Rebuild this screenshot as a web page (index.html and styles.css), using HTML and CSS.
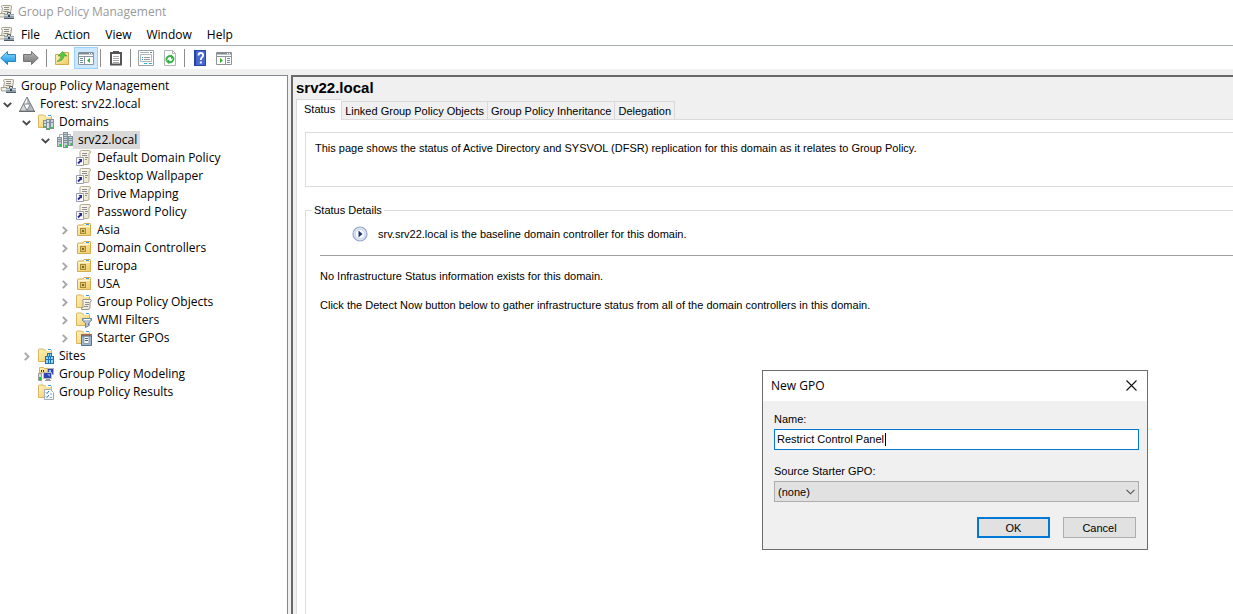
FILE: index.html
```html
<!DOCTYPE html>
<html lang="en">
<head>
<meta charset="utf-8">
<title>Group Policy Management</title>
<link rel="stylesheet" href="styles.css">
</head>
<body>
<svg class="sprite" aria-hidden="true">
  <defs>
    <linearGradient id="blueGrad" x1="0" y1="0" x2="0" y2="1"><stop offset="0" stop-color="#8fdcff"/><stop offset="1" stop-color="#0d8ce0"/></linearGradient>
    <linearGradient id="grayGrad" x1="0" y1="0" x2="0" y2="1"><stop offset="0" stop-color="#b8b8b8"/><stop offset="1" stop-color="#747474"/></linearGradient>
    <linearGradient id="folderGrad" x1="0" y1="0" x2="1" y2="1"><stop offset="0" stop-color="#fff3bd"/><stop offset="1" stop-color="#f0cb68"/></linearGradient>
    <linearGradient id="paperGrad" x1="0" y1="0" x2="1" y2="1"><stop offset="0" stop-color="#fffef6"/><stop offset="1" stop-color="#e6dfc8"/></linearGradient>
  </defs>
  <symbol id="console" viewBox="0 0 16 16">
    <path d="M4.500 1.500h8q1.500 0 1 1.500l-1 6.500V11H1.500V9.500h2l1-5.500-1-1q0-1.500 1-1.500z" fill="url(#paperGrad)" stroke="#a9a28c"/>
    <path d="M6 3.500h5M6 5.500h5M5.500 7.500h5" stroke="#8c8d92"/>
    <path d="M1 9.500h6v3.500H1.500z" fill="#f4efdd" stroke="#a9a28c"/>
    <path d="M9.500 10V8.500h3V10" fill="none" stroke="#56616c"/>
    <path d="M6 10h10v5H6z" fill="#8fa0ae"/><path d="M6 14h10v1H6z" fill="#4f5b66"/><path d="M6 11h10v1H6z" fill="#c7d3dc"/><path d="M10 11h2v2h-2z" fill="#36414b"/>
  </symbol>
  <symbol id="folder" viewBox="0 0 16 16">
    <path d="M.5 13.500V2q0-1 1-1h4l1 1h6q1 0 1 1v10.500z" fill="url(#folderGrad)" stroke="#dab35c"/>
    <path d="M8 1h5v2H8z" fill="#fff"/><path d="M10 1.500h3" stroke="#3c9be0"/>
  </symbol>
  <symbol id="server" viewBox="0 0 5 10">
    <path d="M0 0h5v10H0z" fill="#82929c"/><path d="M1 1h3v8H1z" fill="#c3cfd6"/>
    <path d="M1 2.500h3M1 4.500h3" stroke="#7f919b"/><path d="M3 7h1v2H3z" fill="#20d028"/><path d="M2 7h1v2H2z" fill="#60c868"/>
  </symbol>
  <symbol id="forest" viewBox="0 0 16 16">
    <path d="M8 .8L15.500 15H.5z" fill="#d2d6d8"/>
    <path d="M8 1v14l7.500 0z" fill="#b5babd"/><path d="M4.500 8h7L8 14.500z" fill="#fff"/><path d="M8 1v7H4.500z" fill="#f5f6f6"/>
    <path d="M8 1l7.300 14H.7zM4.500 8h7L8 14.500z" fill="none" stroke="#7b8185"/>
    <path d="M0 15.500h16" stroke="#666c70"/>
  </symbol>
  <symbol id="domain" viewBox="0 0 16 16">
    <path d="M2.500 6V2.500h11V5" fill="none" stroke="#a3afb6"/>
    <use href="#server" x="6" y="0" width="5" height="10"/>
    <use href="#server" x="0" y="5" width="5" height="10"/>
    <use href="#server" x="11" y="4" width="5" height="10"/>
    <use href="#server" x="6" y="6" width="5" height="10"/>
  </symbol>
  <symbol id="domains" viewBox="0 0 16 16">
    <use href="#folder" width="16" height="16"/>
    <path d="M5 6h4v8H5zM12 5h4v10h-4z" fill="#82929c"/><path d="M6 7h2v6H6zM13 6h2v8h-2z" fill="#cdd8de"/>
    <path d="M8 5h4v11H8z" fill="#82929c"/><path d="M9 6h2v9H9z" fill="#d6e0e5"/>
    <path d="M6 12h2v1H6zM13 13h2v1h-2zM9 14h2v1H9z" fill="#20d028"/>
    <path d="M9 8.500h2M13 8.500h2M6 9.500h2" stroke="#82929c"/>
  </symbol>
  <symbol id="gpolink" viewBox="0 0 16 16">
    <path d="M5.500 .5H13q1.500 0 1.500 1.500T13 3.500v9.500q0 1.500-1.500 1.500H4V2q0-1.500 1.500-1.500z" fill="url(#paperGrad)" stroke="#b3ac93"/>
    <path d="M6 3.500h5M6 5.500h5M9 7.500h3M9 9.500h2" stroke="#8e8f94"/>
    <path d="M.5 7.500h7v8h-7z" fill="#fff" stroke="#9a9bb4"/>
    <path d="M2 13.500l3-3" stroke="#2a2a96" stroke-width="1.800"/><path d="M2.500 9H6v3.500z" fill="#2a2a96"/>
  </symbol>
  <symbol id="ou" viewBox="0 0 16 16">
    <path d="M1.500 13.500V4q0-1 1-1H7l1-1.500h6q.500 0 .500 1v11z" fill="url(#folderGrad)" stroke="#d6ac4e"/>
    <path d="M8 2h6v1H8z" fill="#fff"/><path d="M10 2.500h3" stroke="#3c9be0"/>
    <path d="M2 4.500h12" stroke="#fff8d8"/>
    <path d="M4 6h6v6H4z" fill="#a68a38"/><path d="M5 7h4v4H5z" fill="#e3c56c"/><path d="M6 8h2v2H6z" fill="#806820"/>
  </symbol>
  <symbol id="gpos" viewBox="0 0 16 16">
    <use href="#folder" width="16" height="16"/>
    <path d="M7 5.500h7q1.500 0 1.500 1T14 8v5.500q0 2-2 2H5.500v-2H7V7q-1-1.500 0-1.500z" fill="url(#paperGrad)" stroke="#979790"/>
    <path d="M9 8.500h4M9 10.500h4M8 12.500h4" stroke="#8e8f94"/>
  </symbol>
  <symbol id="wmi" viewBox="0 0 16 16">
    <use href="#folder" width="16" height="16"/>
    <path d="M6.500 6.500h9v2L12.500 11v3l-3 1.500V11l-3-2.500z" fill="#b4c4d4" stroke="#71879a"/><path d="M8 7.500h6" stroke="#fff"/>
  </symbol>
  <symbol id="starter" viewBox="0 0 16 16">
    <use href="#folder" width="16" height="16"/>
    <path d="M5 4h11v2H5z" fill="#a8675a"/>
    <path d="M5.500 6v9.500h10V6z" fill="#9db6cd" stroke="#557292"/><path d="M8 6.500h5v7H8z" fill="#fff" stroke="#8aa0b5"/><path d="M9 8.500h3M9 10.500h3" stroke="#4c657f"/>
  </symbol>
  <symbol id="sites" viewBox="0 0 16 16">
    <use href="#folder" width="16" height="16"/>
    <path d="M9 5h5v3h2v8H7V8h2z" fill="#1d76bd"/><path d="M10 6h1v2h-1zM12 6h1v2h-1zM8 9h2v2H8zM11 9h1v2h-1zM13 9h2v2h-2zM8 12h2v3H8zM11 12h1v3h-1zM13 12h2v3h-2z" fill="#8fd5f8"/>
  </symbol>
  <symbol id="modeling" viewBox="0 0 16 16">
    <path d="M1.500 7V1.500h4l1 1h6V6z" fill="url(#folderGrad)" stroke="#dab35c"/>
    <path d="M9.500 2.500h6v6h-6z" fill="#3346aa" stroke="#b0b0b0"/><path d="M11 4h2v2h-2z" fill="#9bf"/>
    <path d="M5.500 6.500h8v6h-8z" fill="#2d43b0" stroke="#c0c0c0"/><path d="M9 8h3v3z" fill="#7c97eb"/><path d="M8 13h4v1H8zM7 14h6v1H7z" fill="#999"/>
    <path d="M.5 7.500h3v7h-3z" fill="#ddd" stroke="#999"/><path d="M1 11h2v3H1z" fill="#18c828"/><path d="M3 4h1v2H3zM5 4h1v2H5z" fill="#333"/>
  </symbol>
  <symbol id="results" viewBox="0 0 16 16">
    <use href="#folder" width="16" height="16"/>
    <path d="M6.500 5.500h6l3 3v7h-9z" fill="#f8fafc" stroke="#a3adb5"/><path d="M8 8.500l1 1 2-2.500M8 12.500l1 1 2-2.500" stroke="#257bc5" fill="none"/><path d="M12 10h2M12 13.500h2" stroke="#999"/>
  </symbol>
  <symbol id="open" viewBox="0 0 9 6"><path d="M.8 .8L4.500 4.500 8.200 .8" fill="none" stroke="#484848" stroke-width="1.900"/></symbol>
  <symbol id="closed" viewBox="0 0 6 9"><path d="M.8 .8L4.500 4.500.8 8.200" fill="none" stroke="#a6a6a6" stroke-width="1.900"/></symbol>
</svg>

<div class="app">
  <header class="titlebar"><svg class="icon edge"><use href="#console"/></svg><span>Group Policy Management</span></header>
  <nav class="menubar">
    <svg class="icon edge"><use href="#console"/></svg>
    <button type="button">File</button><button type="button">Action</button><button type="button">View</button><button type="button">Window</button><button type="button">Help</button>
  </nav>
  <div class="toolbar" role="toolbar" aria-label="Standard">
    <div class="nav-tools">
      <button type="button" aria-label="Back"><svg class="icon" viewBox="0 0 16 16"><path d="M.7 8L7.500 1.500v3h8v7h-8v3z" fill="url(#blueGrad)" stroke="#2a83bd"/></svg></button>
      <button type="button" aria-label="Forward"><svg class="icon" viewBox="0 0 16 16"><path d="M15.300 8L8.500 1.500v3h-8v7h8v3z" fill="url(#grayGrad)" stroke="#757575"/></svg></button>
    </div>
    <span class="divider"></span>
    <button type="button" aria-label="Up one level"><svg class="icon" viewBox="0 0 16 16"><path d="M1.500 14.500V4.500h7l1-2h5v12z" fill="url(#folderGrad)" stroke="#d3aa4c"/><path d="M3 11.500Q6.500 10 7 6H4l4.500-4.500L13 6h-3Q9.500 11 3 11.500z" fill="#5bc63f" stroke="#3d9c30" stroke-width=".6"/></svg></button>
    <button type="button" class="pressed" aria-label="Show or hide console tree"><svg class="icon" viewBox="0 0 16 16"><path d="M.5 2.500h15v12H.5z" fill="#fff" stroke="#8d969c"/><path d="M1 3.500h14" stroke="#7f898f" stroke-width="2"/><path d="M11 3.500h1M13 3.500h1" stroke="#fff"/><path d="M1 6.500h14M6.500 6v8" stroke="#8d969c"/><path d="M2 8.500h3M2 10.500h3M2 12.500h3" stroke="#6e8ea8"/><path d="M12 8v5L9 10.500z" fill="#35b02d"/></svg></button>
    <span class="divider"></span>
    <button type="button" aria-label="Paste"><svg class="icon" viewBox="0 0 16 16"><path d="M3 3h10v11.500H3z" fill="#fff" stroke="#555" stroke-width="2"/><path d="M5 1h6v3H5z" fill="#555"/><path d="M5 6.500h6M5 8.500h6M5 10.500h6M5 12.500h6" stroke="#aaa"/></svg></button>
    <span class="divider"></span>
    <button type="button" aria-label="Properties"><svg class="icon" viewBox="0 0 16 16"><path d="M.5 .5h15v15H.5z" fill="#fff" stroke="#98a2a8"/><path d="M2 2.500h9" stroke="#aab3b9"/><path d="M12 2.500h2" stroke="#688"/><path d="M2.500 4.500h11v7h-11z" fill="none" stroke="#b0b8bd"/><path d="M4 7.500h1M4 9.500h1" stroke="#238be0"/><path d="M6 7.500h6M6 9.500h6" stroke="#999"/><path d="M6 13.500h3M11 13.500h3" stroke="#2ab2f0"/></svg></button>
    <button type="button" aria-label="Refresh"><svg class="icon" viewBox="0 0 16 16"><path d="M2.500 .5h8l3 3v12h-11z" fill="#fff" stroke="#b3b6b8"/><path d="M10.500 .5v3h3" fill="none" stroke="#b3b6b8"/><path d="M4.500 10.500a3.700 3.700 0 0 1 5.500-4M11.500 8a3.700 3.700 0 0 1-5 4" fill="none" stroke="#35b044" stroke-width="1.900"/><path d="M9 4.500l3.500 3L9 9zM7.500 9.500L3.500 11l3.500 3z" fill="#35b044"/></svg></button>
    <span class="divider"></span>
    <button type="button" aria-label="Help"><svg class="icon" viewBox="0 0 16 16"><path d="M2 0h12v16H2z" fill="#4767d2"/><path d="M2 0h2v16H2z" fill="#24409d"/><path d="M2.500 .5h11v15h-11z" fill="none" stroke="#2c479f"/><path d="M6.500 5.500q0-2.500 2.300-2.500t2.300 2.200q0 1.500-1.300 2.300-1 .7-1 2.500" fill="none" stroke="#fff" stroke-width="1.800"/><path d="M7.800 11.500h2v2h-2z" fill="#fff"/></svg></button>
    <button type="button" aria-label="Show or hide action pane"><svg class="icon" viewBox="0 0 16 16"><path d="M.5 2.500h15v12H.5z" fill="#fff" stroke="#8d969c"/><path d="M1 3.500h14" stroke="#7f898f" stroke-width="2"/><path d="M11 3.500h1M13 3.500h1" stroke="#fff"/><path d="M1 6.500h14M9.500 6v8" stroke="#8d969c"/><path d="M11 8.500h3M11 10.500h3M11 12.500h3" stroke="#6e8ea8"/><path d="M4 8v5l3-2.500z" fill="#35b02d"/></svg></button>
  </div>

  <div class="workspace">
    <aside class="tree">
      <div class="row root"><svg class="icon edge"><use href="#console"/></svg><span class="label">Group Policy Management</span></div>
      <ul>
        <li><div class="row"><span class="twisty"><svg class="open"><use href="#open"/></svg></span><svg class="icon"><use href="#forest"/></svg><span class="label">Forest: srv22.local</span></div>
          <ul>
            <li><div class="row"><span class="twisty"><svg class="open"><use href="#open"/></svg></span><svg class="icon"><use href="#domains"/></svg><span class="label">Domains</span></div>
              <ul>
                <li><div class="row"><span class="twisty"><svg class="open"><use href="#open"/></svg></span><svg class="icon"><use href="#domain"/></svg><span class="label selected">srv22.local</span></div>
                  <ul>
                    <li class="row"><span class="twisty"></span><svg class="icon"><use href="#gpolink"/></svg><span class="label">Default Domain Policy</span></li>
                    <li class="row"><span class="twisty"></span><svg class="icon"><use href="#gpolink"/></svg><span class="label">Desktop Wallpaper</span></li>
                    <li class="row"><span class="twisty"></span><svg class="icon"><use href="#gpolink"/></svg><span class="label">Drive Mapping</span></li>
                    <li class="row"><span class="twisty"></span><svg class="icon"><use href="#gpolink"/></svg><span class="label">Password Policy</span></li>
                    <li class="row"><span class="twisty"><svg class="closed"><use href="#closed"/></svg></span><svg class="icon"><use href="#ou"/></svg><span class="label">Asia</span></li>
                    <li class="row"><span class="twisty"><svg class="closed"><use href="#closed"/></svg></span><svg class="icon"><use href="#ou"/></svg><span class="label">Domain Controllers</span></li>
                    <li class="row"><span class="twisty"><svg class="closed"><use href="#closed"/></svg></span><svg class="icon"><use href="#ou"/></svg><span class="label">Europa</span></li>
                    <li class="row"><span class="twisty"><svg class="closed"><use href="#closed"/></svg></span><svg class="icon"><use href="#ou"/></svg><span class="label">USA</span></li>
                    <li class="row"><span class="twisty"><svg class="closed"><use href="#closed"/></svg></span><svg class="icon"><use href="#gpos"/></svg><span class="label">Group Policy Objects</span></li>
                    <li class="row"><span class="twisty"><svg class="closed"><use href="#closed"/></svg></span><svg class="icon"><use href="#wmi"/></svg><span class="label">WMI Filters</span></li>
                    <li class="row"><span class="twisty"><svg class="closed"><use href="#closed"/></svg></span><svg class="icon"><use href="#starter"/></svg><span class="label">Starter GPOs</span></li>
                  </ul>
                </li>
              </ul>
            </li>
            <li class="row"><span class="twisty"><svg class="closed"><use href="#closed"/></svg></span><svg class="icon"><use href="#sites"/></svg><span class="label">Sites</span></li>
            <li class="row"><span class="twisty"></span><svg class="icon"><use href="#modeling"/></svg><span class="label">Group Policy Modeling</span></li>
            <li class="row"><span class="twisty"></span><svg class="icon"><use href="#results"/></svg><span class="label">Group Policy Results</span></li>
          </ul>
        </li>
      </ul>
    </aside>

    <main class="details">
      <h1>srv22.local</h1>
      <div class="tabs" role="tablist">
        <button type="button" role="tab" aria-selected="true" class="active">Status</button>
        <button type="button" role="tab">Linked Group Policy Objects</button>
        <button type="button" role="tab">Group Policy Inheritance</button>
        <button type="button" role="tab">Delegation</button>
      </div>
      <section class="page" role="tabpanel">
        <div class="notice">This page shows the status of Active Directory and SYSVOL (DFSR) replication for this domain as it relates to Group Policy.</div>
        <fieldset>
          <legend>Status Details</legend>
          <div class="baseline">
            <svg class="icon" viewBox="0 0 16 16"><circle cx="8" cy="8" r="7" fill="#dfe8f5" stroke="#95a5c8" stroke-width="1.200"/><circle cx="8" cy="8" r="4.800" fill="#fff" stroke="#c5d2e9"/><path d="M6.500 4.500v7L10.500 8z" fill="#1c3474"/></svg>
            <span>srv.srv22.local is the baseline domain controller for this domain.</span>
          </div>
          <p>No Infrastructure Status information exists for this domain.</p>
          <p>Click the Detect Now button below to gather infrastructure status from all of the domain controllers in this domain.</p>
        </fieldset>
      </section>
    </main>
  </div>

  <form class="dialog" role="dialog" aria-labelledby="dialog-title">
    <div class="dialog-title"><span id="dialog-title">New GPO</span>
      <button type="button" class="close" aria-label="Close"><svg viewBox="0 0 11 11"><path d="M.5 .5l10 10M10.500 .5l-10 10" stroke="#111" stroke-width="1.100"/></svg></button>
    </div>
    <div class="dialog-body">
      <label for="gpo-name">Name:</label>
      <div class="field name-field">
        <input id="gpo-name" type="text" value="Restrict Control Panel">
        <span class="caret"></span>
      </div>
      <label for="gpo-source">Source Starter GPO:</label>
      <div class="field">
        <select id="gpo-source"><option>(none)</option></select>
        <svg class="arrow" viewBox="0 0 9 6"><path d="M.5 .8l4 4 4-4" fill="none" stroke="#505050" stroke-width="1.100"/></svg>
      </div>
      <div class="actions"><button type="submit" class="default">OK</button><button type="button">Cancel</button></div>
    </div>
  </form>
</div>
</body>
</html>
```
FILE: styles.css
```css
* { box-sizing: border-box; }
body { margin: 0; color: #000; font: 12px "Open Sans", "Noto Sans", sans-serif; background: #f0f0f0; }
button { padding: 0; border: 0; background: none; color: inherit; font: inherit; }
ul { margin: 0; padding: 0; list-style: none; }
.sprite { position: absolute; width: 0; height: 0; }
.icon { display: block; flex: none; width: 16px; height: 16px; }
.edge { margin-left: -2px; }
.app { display: flex; flex-direction: column; position: relative; height: 100vh; overflow: hidden; }

.titlebar, .menubar, .toolbar { display: flex; flex: none; align-items: center; background: #fff; }
.titlebar { height: 23px; gap: 4px; color: #999; }
.menubar { height: 23px; gap: 15px; border-bottom: 1px solid #a8adb5; }
.menubar .icon { margin-right: -8px; }
.toolbar { height: 23px; }
.toolbar button { display: grid; place-items: center; width: 24px; height: 22px; }
.nav-tools { display: flex; gap: 7px; padding-right: 5px; }
.toolbar .nav-tools button { width: 16px; }
.toolbar .pressed { background: #cce8ff; border: 1px solid #99d1ff; }
.divider { width: 1px; height: 18px; margin: 0 3px 0 2px; background: #8c8c8c; }

.workspace { display: flex; flex: 1; gap: 3px; min-height: 0; padding-top: 6px; }
.tree { flex: none; width: 288px; padding-top: 1px; background: #fff; border: solid #828790; border-width: 1px 1px 0 0; }
.tree .root .icon { margin-left: 0; }
.tree ul ul { padding-left: 19px; }
.row { display: flex; align-items: center; height: 18px; white-space: nowrap; }
.twisty { display: flex; flex: none; justify-content: center; width: 19px; padding: 1px 4px 0 0; }
.twisty .open { width: 9px; height: 6px; }
.twisty .closed { width: 6px; height: 9px; }
.label { height: 18px; padding: 0 3px 0 5px; line-height: 18px; }
.selected { background: #d9d9d9; }

.details { display: flex; flex: 1; flex-direction: column; min-width: 0; padding-left: 3px; border: solid #696969; border-width: 2px 0 0 2px; font: 11px "Liberation Sans", Arial, sans-serif; }
.details h1 { margin: 0; padding: 2px 0; font: bold 15px/18px "Liberation Sans", Arial, sans-serif; }
.tabs { display: flex; align-items: flex-end; height: 20px; }
.tabs button { height: 18px; padding: 0 3px; border: 1px solid #d9d9d9; border-width: 1px 0 0 1px; }
.tabs button:last-child { border-right-width: 1px; }
.tabs .active { height: 21px; margin-bottom: -1px; padding: 0 6px 2px 7px; background: #fff; z-index: 1; }
.page { display: flex; flex: 1; flex-direction: column; padding: 12px 0 0 8px; background: #fff; border: solid #dcdcdc; border-width: 1px 0 0 1px; }
.notice { height: 55px; padding: 9px; line-height: 12px; border: 1px solid #dcdcdc; border-right: 0; white-space: nowrap; }
fieldset { flex: 1; min-width: 0; margin: 17px 0 0; padding: 0 0 0 14px; border: 1px solid #dcdcdc; border-width: 1px 0 0 1px; white-space: nowrap; }
legend { margin-left: -8px; padding: 0 2px; line-height: 13px; }
.baseline { display: flex; align-items: center; gap: 10px; height: 39px; padding: 0 0 4px 32px; border-bottom: 1px solid #a0a0a0; }
fieldset p { margin: 0; line-height: 13px; }
.baseline + p { margin: 14px 0 16px; }

.dialog { position: absolute; top: 370px; left: 762px; width: 386px; background: #f0f0f0; border: 1px solid #6d6d6d; font: 11px "Liberation Sans", Arial, sans-serif; }
.dialog-title { display: flex; align-items: center; justify-content: space-between; height: 30px; padding: 0 10px 2px 8px; background: #fff; font: 12px "Open Sans", "Noto Sans", sans-serif; }
.close svg { display: block; width: 11px; height: 11px; }
.dialog-body { display: flex; flex-direction: column; padding: 12px 8px 11px 11px; }
.dialog label { margin-bottom: 3px; line-height: 13px; }
.dialog input, .dialog select { width: 100%; height: 21px; margin: 0; padding: 0 3px; border: 1px solid #adadad; border-radius: 0; outline: 0; color: #000; font: inherit; }
.dialog input { padding: 0 2px 2px; background: #fff; border-color: #0078d7; }
.dialog select { appearance: none; background: #e1e1e1; }
.field { display: grid; align-items: center; }
.field > * { grid-area: 1 / 1; }
.name-field { margin-bottom: 15px; }
.caret { width: 1px; height: 13px; margin-left: 111px; background: #000; }
.arrow { justify-self: end; width: 9px; height: 6px; margin-right: 4px; pointer-events: none; }
.actions { display: flex; justify-content: flex-end; gap: 13px; margin: 15px 3px 0 0; }
.actions button { width: 73px; height: 21px; background: #e1e1e1; border: 1px solid #adadad; }
.actions .default { border: 2px solid #0078d7; }
```
